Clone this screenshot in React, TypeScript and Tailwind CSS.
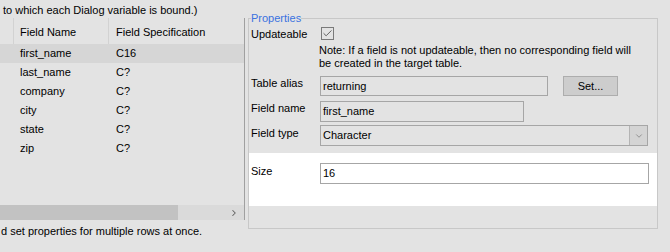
import { Check, ChevronDown, ChevronRight } from "lucide-react";

const ROWS = [
  { name: "first_name", spec: "C16" },
  { name: "last_name", spec: "C?" },
  { name: "company", spec: "C?" },
  { name: "city", spec: "C?" },
  { name: "state", spec: "C?" },
  { name: "zip", spec: "C?" },
];

function FieldTable() {
  const selected = "first_name";

  return (
    <div className="w-[245px] h-[202px] border-r border-[#a0a0a0] flex flex-col">
      {/* Header */}
      <div className="flex h-[26px] shrink-0">
        <div className="w-[14px] border-r border-[#d2d2d2]" />
        <div className="w-[95px] border-r border-[#d2d2d2] pl-[6px] flex items-center pt-[2px]">Field Name</div>
        <div className="flex-1 pl-[7px] flex items-center pt-[2px] whitespace-nowrap">Field Specification</div>
      </div>

      {/* Rows */}
      {ROWS.map((row) => (
        <div
          key={row.name}
          className={`flex h-[19px] shrink-0 items-center ${row.name === selected ? "bg-[#d6d6d6]" : ""}`}
        >
          <div className="w-[14px]" />
          <div className="w-[95px] pl-[6px]">{row.name}</div>
          <div className="flex-1 pl-[7px]">{row.spec}</div>
        </div>
      ))}

      <div className="flex-1" />

      {/* Horizontal scrollbar */}
      <div className="h-[15px] shrink-0 bg-[#dadada] flex items-center">
        <div className="w-[178px] h-full bg-[#c2c2c2]" />
        <div className="flex-1" />
        <ChevronRight className="w-[10px] h-[10px] text-[#606060] mr-[5px]" strokeWidth={2.5} />
      </div>
    </div>
  );
}

function Label({ children }: { children: React.ReactNode }) {
  return <div className="w-[71px] shrink-0 pl-[2px] leading-[14px]">{children}</div>;
}

function PropertiesBox() {
  return (
    <fieldset className="mt-[11px] w-[410px] h-[218px] border border-[#c8c8c8] flex flex-col">
      <legend className="ml-[2px] leading-[14px] text-[#3a72e0]">Properties</legend>

      {/* Updateable */}
      <div className="flex mt-[2px] h-[13px]">
        <Label>Updateable</Label>
        <div className="ml-[1px] w-[13px] h-[13px] border border-[#7a7a7a] flex items-center justify-center">
          <Check className="w-[11px] h-[11px] text-[#555]" strokeWidth={2} />
        </div>
      </div>
      <div className="mt-[4px] pl-[70px] leading-[13px]">
        Note: If a field is not updateable, then no corresponding field will
        <br />
        be created in the target table.
      </div>

      {/* Table alias */}
      <div className="flex mt-[6px] h-[20px]">
        <Label>Table alias</Label>
        <div className="w-[228px] h-[20px] border border-[#a6a6a6] pl-[2px] flex items-center">returning</div>
        <button className="ml-[15px] w-[55px] h-[20px] bg-[#cdcdcd] border border-[#adadad] flex items-center justify-center">
          Set...
        </button>
      </div>

      {/* Field name */}
      <div className="flex mt-[5px] h-[20px]">
        <Label>Field name</Label>
        <div className="w-[204px] h-[21px] border border-[#a6a6a6] pl-[2px] flex items-center">first_name</div>
      </div>

      {/* Field type */}
      <div className="flex mt-[4px] h-[21px]">
        <div className="w-[71px] shrink-0 pl-[2px] pt-[1px] leading-[14px]">Field type</div>
        <div className="w-[328px] h-[21px] border border-[#a6a6a6] flex items-center">
          <div className="flex-1 pl-[2px]">Character</div>
          <div className="w-[18px] h-full bg-[#d4d4d4] border-l border-[#b4b4b4] flex items-center justify-center">
            <ChevronDown className="w-[10px] h-[10px] text-[#6a6a6a]" strokeWidth={1.5} />
          </div>
        </div>
      </div>

      {/* Size */}
      <div className="mt-[7px] h-[53px] bg-white flex pt-[10px]">
        <div className="w-[71px] shrink-0 pl-[2px] pt-[1px] leading-[14px]">Size</div>
        <div className="w-[329px] h-[21px] border border-[#a6a6a6] pl-[2px] flex items-center">16</div>
      </div>
    </fieldset>
  );
}

export default function App() {
  return (
    <div
      className="w-[670px] h-[252px] bg-[#e3e3e3] overflow-hidden flex text-[11px] text-black"
      style={{ fontFamily: '"Liberation Sans", Arial, sans-serif' }}
    >
      {/* Left: field list */}
      <div className="w-[248px] shrink-0 flex flex-col">
        <div className="h-[18px] pl-[3px] pt-[4px] leading-[12px] whitespace-nowrap">
          to which each Dialog variable is bound.)
        </div>
        <FieldTable />
        <div className="pl-[1px] pt-[4px] leading-[14px] whitespace-nowrap">
          d set properties for multiple rows at once.
        </div>
      </div>

      {/* Right: properties */}
      <PropertiesBox />
    </div>
  );
}
